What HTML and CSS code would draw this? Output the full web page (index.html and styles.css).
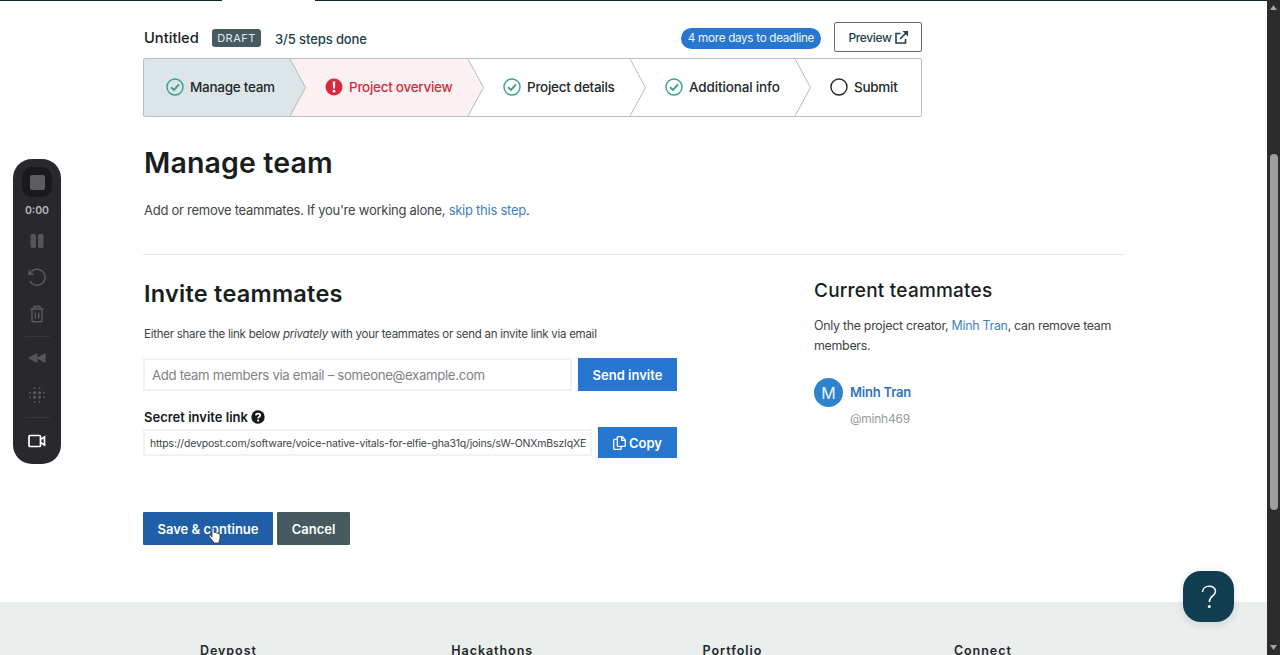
FILE: index.html
```html
<!DOCTYPE html>
<html lang="en">
<head>
    <meta charset="UTF-8">
    <meta name="viewport" content="width=device-width, initial-scale=1.0">
    <title>Manage team - Devpost</title>
    <link rel="stylesheet" href="styles.css">
</head>
<body>
    <div class="window">
        <div class="page">
            <div class="top-strip"><div class="active-tab"></div></div>

            <main class="content">
                <header class="project-header">
                    <span class="project-name">Untitled</span>
                    <span class="draft-label">DRAFT</span>
                    <span class="steps-done">3/5 steps done</span>
                    <span class="deadline">4 more days to deadline</span>
                    <a class="preview-button">Preview
                        <svg width="13" height="13" viewBox="0 0 13 13" fill="none" stroke="currentColor" stroke-width="1.6"><path d="M5.500 2.500H1V12h9.500V8M5 8l6.500-6.500"/><path d="M7.500 0H13v5.500z" fill="currentColor" stroke="none"/></svg>
                    </a>
                </header>

                <nav class="steps">
                    <a class="step step-team">
                        <svg class="step-icon" viewBox="0 0 18 18"><circle cx="9" cy="9" r="8"/><path d="M5 9.200l3 2.700 5-5.600" stroke-width="2"/></svg>
                        <span>Manage team</span>
                        <svg class="arrow" viewBox="0 0 17 57"><path d="M0 0l15.500 28.500L0 57"/></svg>
                    </a>
                    <a class="step step-overview">
                        <svg class="step-icon" viewBox="0 0 18 18"><circle cx="9" cy="9" r="8.500" fill="#d9293a" stroke="none"/><path d="M7.700 3.500h2.600l-.4 7H8.100z" fill="#fff" stroke="none"/><circle cx="9" cy="13.200" r="1.400" fill="#fff" stroke="none"/></svg>
                        <span>Project overview</span>
                        <svg class="arrow" viewBox="0 0 17 57"><path d="M0 0l15.500 28.500L0 57"/></svg>
                    </a>
                    <a class="step step-details">
                        <svg class="step-icon" viewBox="0 0 18 18"><circle cx="9" cy="9" r="8"/><path d="M5 9.200l3 2.700 5-5.600" stroke-width="2"/></svg>
                        <span>Project details</span>
                        <svg class="arrow" viewBox="0 0 17 57"><path d="M0 0l15.500 28.500L0 57"/></svg>
                    </a>
                    <a class="step step-info">
                        <svg class="step-icon" viewBox="0 0 18 18"><circle cx="9" cy="9" r="8"/><path d="M5 9.200l3 2.700 5-5.600" stroke-width="2"/></svg>
                        <span>Additional info</span>
                        <svg class="arrow" viewBox="0 0 17 57"><path d="M0 0l15.500 28.500L0 57"/></svg>
                    </a>
                    <a class="step step-submit">
                        <svg class="step-icon" viewBox="0 0 18 18"><circle cx="9" cy="9" r="8"/></svg>
                        <span>Submit</span>
                    </a>
                </nav>

                <h1>Manage team</h1>
                <p class="intro">Add or remove teammates. If you're working alone, <a>skip this step</a>.</p>

                <div class="columns">
                    <section class="invite">
                        <h2>Invite teammates</h2>
                        <p class="invite-hint">Either share the link below <em>privately</em> with your teammates or send an invite link via email</p>
                        <div class="invite-row">
                            <input class="email-input" type="text" placeholder="Add team members via email – someone@example.com">
                            <button class="button send-button">Send invite</button>
                        </div>
                        <div class="secret-label">
                            <span>Secret invite link</span>
                            <svg width="14" height="14" viewBox="0 0 14 14"><circle cx="7" cy="7" r="6.700" fill="#15191c"/><path d="M4.800 5.400C4.900 2.900 9.300 2.900 9.200 5.400 9.200 6.800 7.100 6.900 7.100 8.500" fill="none" stroke="#fff" stroke-width="1.800"/><circle cx="7.100" cy="10.600" r="1.100" fill="#fff"/></svg>
                        </div>
                        <div class="link-row">
                            <input class="link-input" type="text" readonly value="https://devpost.com/software/voice-native-vitals-for-elfie-gha31q/joins/sW-ONXmBszIqXE">
                            <button class="button copy-button">
                                <svg width="13" height="14" viewBox="0 0 13 14" fill="none" stroke="currentColor" stroke-width="1.300"><path d="M5.200.7h3.900l3.200 3.200v5.500q0 .9-.9.900H5.200q-.9 0-.9-.9V1.600q0-.9.9-.9zM8.700.9v3.400h3.500M4.200 3.400H1.600q-.9 0-.9.9v8.100q0 .9.9.9h5.700q.9 0 .9-.9v-2"/></svg>
                                <span>Copy</span>
                            </button>
                        </div>
                        <div class="form-buttons">
                            <button class="button save-button">Save &amp; continue</button>
                            <button class="button cancel-button">Cancel</button>
                            <svg class="cursor" viewBox="0 0 13 17"><path d="M4 10V2.200C4 .4 6.200.4 6.200 2.200V6c.4-.9 1.800-.6 2 .3.500-.7 1.700-.4 1.900.5.700-.6 1.900-.2 1.900 1v3.500c0 1.400-.7 2-.9 3.200V16H5.400v-1.300C4 13.300 2.300 11 1.200 9.500.4 8.300 1.800 7.500 2.700 8.500z" fill="#fff" stroke="#333" stroke-width=".8"/></svg>
                        </div>
                    </section>

                    <aside class="team">
                        <h3>Current teammates</h3>
                        <p class="team-note">Only the project creator, <a>Minh Tran</a>, can remove team members.</p>
                        <div class="member">
                            <div class="avatar">M</div>
                            <div class="member-info">
                                <a class="member-name">Minh Tran</a>
                                <span class="member-handle">@minh469</span>
                            </div>
                        </div>
                    </aside>
                </div>
            </main>

            <footer class="footer">
                <span>Devpost</span>
                <span>Hackathons</span>
                <span>Portfolio</span>
                <span>Connect</span>
            </footer>
        </div>

        <div class="scrollbar">
            <svg width="7" height="5" viewBox="0 0 7 5"><path d="M3.500 0L7 5H0z" fill="#a5a5a5"/></svg>
            <div class="thumb"></div>
            <svg class="scroll-down" width="7" height="5" viewBox="0 0 7 5"><path d="M0 0h7L3.500 5z" fill="#a5a5a5"/></svg>
        </div>
    </div>

    <!-- screen recorder -->
    <div class="recorder">
        <div class="stop"><div class="stop-square"></div></div>
        <span class="time">0:00</span>
        <svg class="rec-icon pause" viewBox="0 0 18 18"><rect x="2.500" y="2" width="5.500" height="14" rx="1.700"/><rect x="10" y="2" width="5.500" height="14" rx="1.700"/></svg>
        <svg class="rec-icon restart" viewBox="0 0 18 18"><path d="M2 5.500A8 8 0 1 1 2 13M1 2v4.300h4.500"/></svg>
        <svg class="rec-icon trash" viewBox="0 0 18 18"><path d="M2.500 4h13M6 4V1.500h6V4M4 4v11q0 1.800 1.800 1.800h6.400q1.800 0 1.800-1.800V4M7.300 7.500v6M10.700 7.500v6"/></svg>
        <div class="rec-line"></div>
        <svg class="rec-icon rewind" viewBox="0 0 18 18"><path d="M8.700 5v8L1 9zM17 5v8L9.300 9z"/></svg>
        <svg class="rec-icon dots" viewBox="0 0 18 18"><path d="M6.500 2v.1M11.500 2v.1M2 6.700h.1M2 11.300h.1M16 6.700h.1M16 11.300h.1M6.500 16v.1M11.500 16v.1"/><path d="M6.500 6.700h.1M11.500 6.700h.1M6.500 11.300h.1M11.500 11.300h.1" stroke-width="3"/></svg>
        <div class="rec-line"></div>
        <svg class="rec-icon camera" viewBox="0 0 18 18"><rect x="1" y="3.500" width="11.500" height="11" rx="1"/><path d="M12.500 7.500L16.500 5v8l-4-2.500"/></svg>
    </div>

    <div class="help-button">
        <svg width="16" height="24" viewBox="0 0 16 24"><path d="M1.500 7C1.500-.6 14.500-.6 14.500 6.300 14.500 11 8.300 10.800 8.300 17" fill="none" stroke="#fff" stroke-width="1.500"/><circle cx="8.300" cy="21.500" r="1.500" fill="#fff"/></svg>
    </div>
</body>
</html>
```
FILE: styles.css
```css
* {
    box-sizing: border-box;
}

body {
    margin: 0;
    height: 655px;
    overflow: hidden;
    background-color: #fff;
    color: #404446;
    font-family: Inter, "Liberation Sans", sans-serif;
    font-size: 13px;
}

h1, h2, h3, p {
    margin: 0;
}

a {
    color: #3b7fc9;
}

.window {
    display: flex;
    height: 655px;
}

.page {
    display: flex;
    flex-direction: column;
    width: 1267px;
}

.top-strip {
    height: 1px;
    padding-left: 222px;
    background-color: #10222c;
}

.active-tab {
    width: 93px;
    height: 1px;
    background-color: #fff;
}

.content {
    width: 982px;
    height: 601px;
    margin-left: 143px;
    padding-top: 21px;
}

/* header */
.project-header {
    display: flex;
    align-items: center;
    width: 779px;
    height: 30px;
}

.project-name {
    width: 69px;
    margin-top: 1px;
    padding-left: 1px;
    color: #1c2023;
    font-size: 14.7px;
    font-weight: 500;
    line-height: 18px;
    white-space: nowrap;
}

.draft-label {
    width: 49px;
    height: 18px;
    margin-top: 2px;
    border-radius: 3px;
    background-color: #465a60;
    color: #e3eaea;
    font-size: 11px;
    letter-spacing: 0.5px;
    line-height: 18px;
    text-align: center;
}

.steps-done {
    margin: 3px auto 0 14px;
    color: #21414d;
    font-weight: 500;
    letter-spacing: -0.1px;
}

.deadline {
    width: 140px;
    height: 21px;
    margin-top: 2px;
    margin-right: 13px;
    border-radius: 11px;
    background-color: #2776cf;
    color: #eef6ff;
    font-size: 11.7px;
    letter-spacing: -0.3px;
    line-height: 21px;
    text-align: center;
    white-space: nowrap;
}

.preview-button {
    display: flex;
    align-items: center;
    justify-content: center;
    gap: 3px;
    width: 88px;
    height: 30px;
    border: 1px solid #5d6b70;
    border-radius: 2px;
    color: #21414d;
    font-size: 12px;
    font-weight: 500;
    letter-spacing: -0.35px;
}

/* steps */
.steps {
    display: flex;
    width: 779px;
    height: 59px;
    margin-top: 6px;
    border: 1px solid #b9bfc0;
    border-radius: 2px;
}

.step {
    position: relative;
    display: flex;
    align-items: center;
    gap: 6px;
    height: 57px;
    padding-bottom: 1px;
    padding-left: 35px;
    color: #23292b;
    font-size: 13.5px;
    font-weight: 500;
    letter-spacing: -0.28px;
    white-space: nowrap;
}

.step-icon {
    width: 18px;
    height: 18px;
    fill: none;
    stroke: #3aa288;
    stroke-width: 1.4;
}

.arrow {
    position: absolute;
    top: 0;
    right: -17px;
    z-index: 1;
    width: 17px;
    height: 57px;
    fill: #fff;
    stroke: #b4babc;
}

.step-team {
    width: 146px;
    padding-left: 22px;
    background-color: #dce5e7;
}

.step-team .arrow {
    fill: #dce5e7;
}

.step-overview {
    width: 178px;
    background-color: #fcf0f2;
    color: #cf2f3c;
}

.step-overview .arrow {
    fill: #fcf0f2;
}

.step-details {
    width: 162px;
}

.step-info {
    width: 165px;
    letter-spacing: -0.15px;
}

.step-submit .step-icon {
    stroke: #23292b;
}

h1 {
    margin-top: 28px;
    padding-left: 1px;
    color: #181e20;
    font-size: 28.5px;
    font-weight: 600;
    letter-spacing: 0.15px;
    line-height: 36px;
}

.intro {
    height: 55px;
    margin-top: 19px;
    padding-left: 1px;
    border-bottom: 1px solid #e5e7e7;
    letter-spacing: -0.26px;
    line-height: 20px;
}

/* two columns */
.columns {
    display: flex;
    justify-content: space-between;
}

.invite {
    width: 534px;
    padding-top: 24px;
}

h2 {
    padding-left: 1px;
    color: #181e20;
    font-size: 23.5px;
    font-weight: 600;
    letter-spacing: 0.25px;
    line-height: 30px;
}

.invite-hint {
    margin-top: 15px;
    padding-left: 1px;
    font-size: 11.5px;
    letter-spacing: -0.26px;
    line-height: 20px;
    white-space: nowrap;
}

.invite-row {
    display: flex;
    justify-content: space-between;
    margin-top: 14px;
}

input {
    border: 2px solid #f1f2f2;
    background-color: #fff;
    color: #404446;
    font-family: inherit;
}

.email-input {
    width: 429px;
    height: 33px;
    padding: 0 7px;
    font-size: 13.2px;
    letter-spacing: -0.32px;
}

.email-input::placeholder {
    color: #808284;
}

.button {
    padding: 0;
    border: none;
    background-color: #2776cf;
    color: #fff;
    font-family: inherit;
    font-size: 13px;
    font-weight: 600;
    white-space: nowrap;
}

.send-button {
    width: 99px;
    height: 33px;
}

.secret-label {
    display: flex;
    align-items: center;
    gap: 3px;
    height: 20px;
    margin-top: 16px;
    padding-left: 1px;
    color: #15191c;
    font-weight: 600;
}

.link-row {
    display: flex;
    align-items: center;
    justify-content: space-between;
}

.link-input {
    width: 449px;
    height: 27px;
    padding: 1px 4px 0 5px;
    font-size: 10.5px;
    letter-spacing: -0.18px;
}

.copy-button {
    display: flex;
    align-items: center;
    justify-content: center;
    gap: 3px;
    width: 79px;
    height: 31px;
}

.form-buttons {
    position: relative;
    display: flex;
    gap: 4px;
    margin-top: 54px;
}

.save-button {
    width: 130px;
    height: 33px;
    border-radius: 1px;
    background-color: #205fa6;
}

.cancel-button {
    width: 73px;
    height: 33px;
    border-radius: 1px;
    background-color: #465a5f;
}

.cursor {
    position: absolute;
    top: 15px;
    left: 65px;
    width: 13px;
    height: 17px;
}

/* current teammates */
.team {
    width: 312px;
    padding-top: 23px;
    padding-left: 1px;
}

h3 {
    color: #181e20;
    font-size: 19px;
    font-weight: 500;
    letter-spacing: 0.22px;
    line-height: 25px;
}

.team-note {
    margin-top: 13px;
    font-size: 12.4px;
    letter-spacing: -0.28px;
    line-height: 20px;
}

.member {
    display: flex;
    gap: 7px;
    margin-top: 22px;
}

.avatar {
    width: 29px;
    height: 29px;
    border-radius: 50%;
    background-color: #2f83cd;
    color: #e8f5ff;
    font-size: 16px;
    line-height: 30px;
    text-align: center;
}

.member-info {
    display: flex;
    flex-direction: column;
    line-height: 26px;
}

.member-name {
    margin-top: 1px;
    color: #2f72c0;
    font-weight: 600;
    letter-spacing: -0.2px;
}

.member-handle {
    margin-top: 1px;
    color: #999;
    font-size: 12px;
    letter-spacing: -0.25px;
}

.footer {
    display: flex;
    height: 53px;
    padding: 41px 0 0 200px;
    background-color: #eaeeed;
    color: #1d282c;
    font-size: 12.5px;
    font-weight: 600;
    letter-spacing: 0.95px;
    line-height: 16px;
    overflow: hidden;
}

.footer span {
    width: 251.3px;
}

/* scrollbar */
.scrollbar {
    display: flex;
    flex-direction: column;
    align-items: center;
    width: 13px;
    padding: 5px 0;
    background-color: #2c2c2c;
}

.thumb {
    width: 8px;
    height: 356px;
    margin-top: 144px;
    border-radius: 4px;
    background-color: #9e9e9e;
}

.scroll-down {
    margin-top: auto;
}

/* floating recorder panel */
.recorder {
    position: absolute;
    top: 159px;
    left: 13px;
    display: flex;
    flex-direction: column;
    align-items: center;
    width: 48px;
    height: 305px;
    padding-top: 8px;
    border-radius: 19px;
    background-color: #29282d;
}

.stop {
    display: flex;
    align-items: center;
    justify-content: center;
    width: 30px;
    height: 30px;
    border-radius: 10px;
    background-color: #19191e;
}

.stop-square {
    width: 15px;
    height: 15px;
    border-radius: 2px;
    background-color: #5d5c61;
}

.time {
    height: 14px;
    margin-top: 7px;
    color: #b5b5b8;
    font-size: 10.5px;
    font-weight: 600;
    line-height: 14px;
}

.rec-icon {
    flex: none;
    width: 18px;
    height: 18px;
    fill: none;
    stroke: #5b5a5f;
    stroke-width: 1.4;
}

.pause, .rewind {
    fill: #56555a;
    stroke: none;
}

.rewind {
    stroke: #56555a;
    stroke-linejoin: round;
}

.pause {
    margin-top: 14px;
}

.restart {
    margin-top: 18px;
}

.trash {
    margin-top: 19px;
}

.rec-line {
    flex: none;
    width: 25px;
    height: 1px;
    margin-top: 13px;
    background-color: #37363b;
}

.rewind {
    margin-top: 12px;
}

.dots {
    margin-top: 19px;
    stroke-width: 1.8;
    stroke-linecap: round;
}

.camera {
    margin-top: 14px;
    stroke: #fff;
    stroke-width: 1.7;
}

.help-button {
    position: absolute;
    top: 571px;
    left: 1183px;
    display: flex;
    align-items: center;
    justify-content: center;
    width: 51px;
    height: 51px;
    border-radius: 18px;
    background-color: #103d50;
    box-shadow: 0 2px 8px rgba(16, 61, 80, 0.15);
}
```
